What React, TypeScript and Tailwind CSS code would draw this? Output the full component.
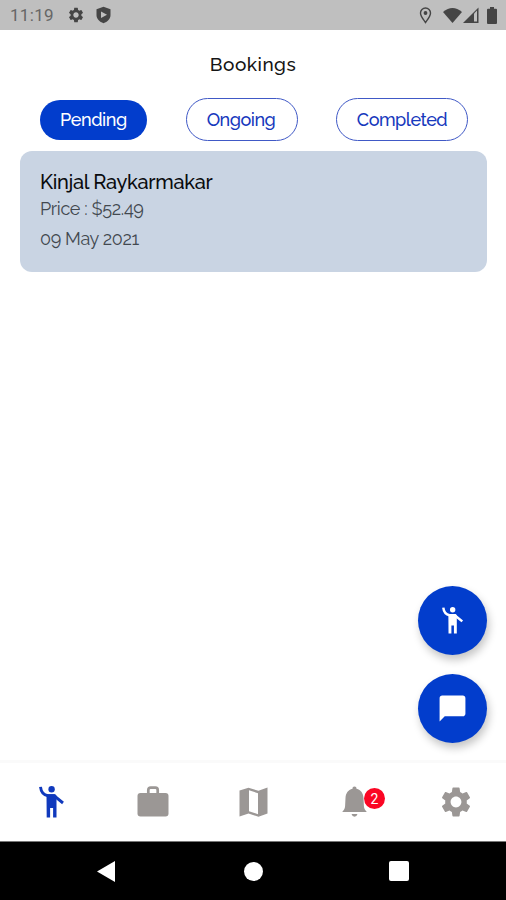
import { MdSettings, MdChatBubble } from 'react-icons/md';

function WavingPerson({ className }: { className: string }) {
  return (
    <svg className={className} viewBox="0 0 26 32" fill="none" stroke="currentColor">
      <circle cx="12.600" cy="3.300" r="3.200" fill="currentColor" stroke="none" />
      <path d="M1.500.800C2 5.500 4.500 9 9 9.700h6l9 7.300" strokeWidth="2.900" strokeLinejoin="round" />
      <path d="M7.500 8.200h8.500q1.500.5 1.500 2V31.500h-3.400V22h-3v9.500H7.700z" fill="currentColor" stroke="none" />
    </svg>
  );
}

function Briefcase() {
  return (
    <svg className="h-[31px] w-[32px]" viewBox="0 0 32 31">
      <path d="M11.300 9V4q0-2.300 2.300-2.300h4.800q2.300 0 2.300 2.300v5" fill="none" stroke="currentColor" strokeWidth="2.700" />
      <rect x=".5" y="7" width="31" height="23.500" rx="3" fill="currentColor" />
    </svg>
  );
}

function FoldedMap() {
  return (
    <svg className="h-[30px] w-[29px]" viewBox="0 0 29 30">
      <path fill="currentColor" fillRule="evenodd" d="M.5 3.500L9.500.800l10 3L28.500.500V26.500l-9 3.200-10-3.200-9 3zM10 3.200v21l9 3V6.300z" />
    </svg>
  );
}

function Bell() {
  return (
    <svg className="h-[31px] w-[25px]" viewBox="0 0 25 31" fill="currentColor">
      <path d="M12.500.5c1.300 0 2 .9 2 2.200 4.500 1.200 6.800 4.700 7 9.300l.4 8c.1 2.200.9 3.900 2.600 5.500v.5H.5v-.5c1.700-1.600 2.500-3.300 2.600-5.500l.4-8c.2-4.600 2.500-8.100 7-9.300 0-1.300.7-2.200 2-2.200z" />
      <path d="M9.500 28h6q-.8 2.700-3 2.700T9.500 28z" />
    </svg>
  );
}

function StatusBar() {
  return (
    <header className="flex h-[30px] shrink-0 items-center bg-[#bfbfbf] pl-[10px] pr-[9px] text-[#454545]">
      <span className="w-[57px] font-['Roboto',sans-serif] text-[17px] leading-[32px] tracking-[0.3px] whitespace-nowrap text-[#666]">11:19</span>
      <MdSettings className="size-[18px]" />
      <svg className="ml-[11px] h-[18px] w-[15px]" viewBox="0 0 15 18">
        <path d="M7.500.8L14.500 3.300V9c0 4-3 6.800-7 8.200C3.500 15.800.5 13 .5 9V3.300z" fill="currentColor" />
        <path d="M5 5.500v6.500l6-3.200z" fill="#bfbfbf" />
      </svg>
      <svg className="ml-auto mr-[-1px] h-[17px] w-[13px]" viewBox="0 0 13 17" fill="none" stroke="currentColor" strokeWidth="1.400">
        <path d="M6.500 15.500C4.500 12.500 1.500 9.500 1.500 6a5 5 0 0110 0c0 3.500-3 6.500-5 9.500z" />
        <circle cx="6.500" cy="6" r="1.200" fill="currentColor" />
      </svg>
      <svg className="ml-[12px] h-[15px] w-[19px]" viewBox="0 0 19 15" fill="currentColor">
        <path d="M0 4Q9.500-4 19 4L9.500 15z" />
      </svg>
      <svg className="ml-[1px] h-[16px] w-[16px]" viewBox="0 0 16 16" fill="currentColor">
        <path d="M0 16L15.500.5V16z" />
        <path d="M11 6.500L14 3.500V14.500H11z" fill="#bfbfbf" />
      </svg>
      <svg className="ml-[8px] h-[17px] w-[10px]" viewBox="0 0 10 17" fill="currentColor">
        <path d="M3 0h4v1.800h2q1 0 1 1V16q0 1-1 1H1q-1 0-1-1V2.800q0-1 1-1h2z" />
      </svg>
    </header>
  );
}

function Tabs() {
  return (
    <div className="mt-[19px] flex h-[43px] items-center pl-[40px] text-[18px] font-medium text-[#1739bd]">
      <button className="h-[40px] w-[107px] rounded-full bg-[#023dcc] tracking-[-0.4px] text-white">Pending</button>
      <button className="ml-[39px] h-[43px] w-[112px] rounded-full border border-[#4059c6] pr-[2px] tracking-[-0.5px]">Ongoing</button>
      <button className="ml-[38px] h-[43px] w-[132px] rounded-full border border-[#4059c6] tracking-[-0.5px]">Completed</button>
    </div>
  );
}

function BookingCard() {
  return (
    <article className="mx-[20px] mt-[10px] h-[121px] w-[467px] rounded-[12px] bg-[#c9d4e3] pl-[20px] pt-[18px] text-[18px] tracking-[-0.35px] text-[#42484f]">
      <h2 className="h-[26px] text-[20px] leading-[27px] font-medium tracking-[-0.3px] text-[#090b0e]">Kinjal Raykarmakar</h2>
      <p className="h-[29px] leading-[27px]">Price : $52.49</p>
      <p className="h-[30px] leading-[29px]">09 May 2021</p>
    </article>
  );
}

function BottomNav() {
  return (
    <nav className="grid h-[81px] shrink-0 grid-cols-5 place-items-center border-t-[3px] border-[#fafafa] bg-white pl-px pb-px text-[#9b9795]">
      <WavingPerson className="h-[32px] w-[26px] text-[#1039bd]" />
      <Briefcase />
      <FoldedMap />
      <div className="relative">
        <Bell />
        <span className="absolute top-[2px] left-[22px] flex size-[21px] items-center justify-center rounded-full bg-[#fb0624] pt-px font-['Roboto',sans-serif] text-[14px] leading-none text-white">2</span>
      </div>
      <MdSettings className="size-[36px]" />
    </nav>
  );
}

export default function App() {
  return (
    <div className="flex h-[900px] w-[506px] flex-col overflow-hidden bg-white font-['Raleway','Lato',sans-serif]">
      <StatusBar />
      <main className="flex min-h-0 flex-1 flex-col">
        <h1 className="mt-[21px] h-[28px] text-center text-[19px] leading-[27px] font-medium tracking-[0.5px] text-[#151515]">Bookings</h1>
        <Tabs />
        <BookingCard />
        <div className="mt-auto mr-[19px] mb-[17px] flex flex-col items-end gap-[19px] text-white">
          <button className="flex size-[69px] items-center justify-center rounded-full bg-[#023dcc] shadow-[2px_5px_8px_rgba(0,0,0,0.23)]">
            <WavingPerson className="h-[27px] w-[22px]" />
          </button>
          <button className="flex size-[69px] items-center justify-center rounded-full bg-[#023dcc] shadow-[2px_5px_8px_rgba(0,0,0,0.23)]">
            <MdChatBubble className="size-[31px]" />
          </button>
        </div>
      </main>
      <BottomNav />
      <footer className="flex h-[59px] shrink-0 items-center border-t border-[#777] bg-black pl-[97px]">
        <svg className="h-[21px] w-[18px]" viewBox="0 0 18 21" fill="white"><path d="M0 10.500L18 0v21z" /></svg>
        <span className="ml-[129px] size-[19px] rounded-full bg-white" />
        <span className="ml-[126px] size-[20px] rounded-[2px] bg-white" />
      </footer>
    </div>
  );
}
